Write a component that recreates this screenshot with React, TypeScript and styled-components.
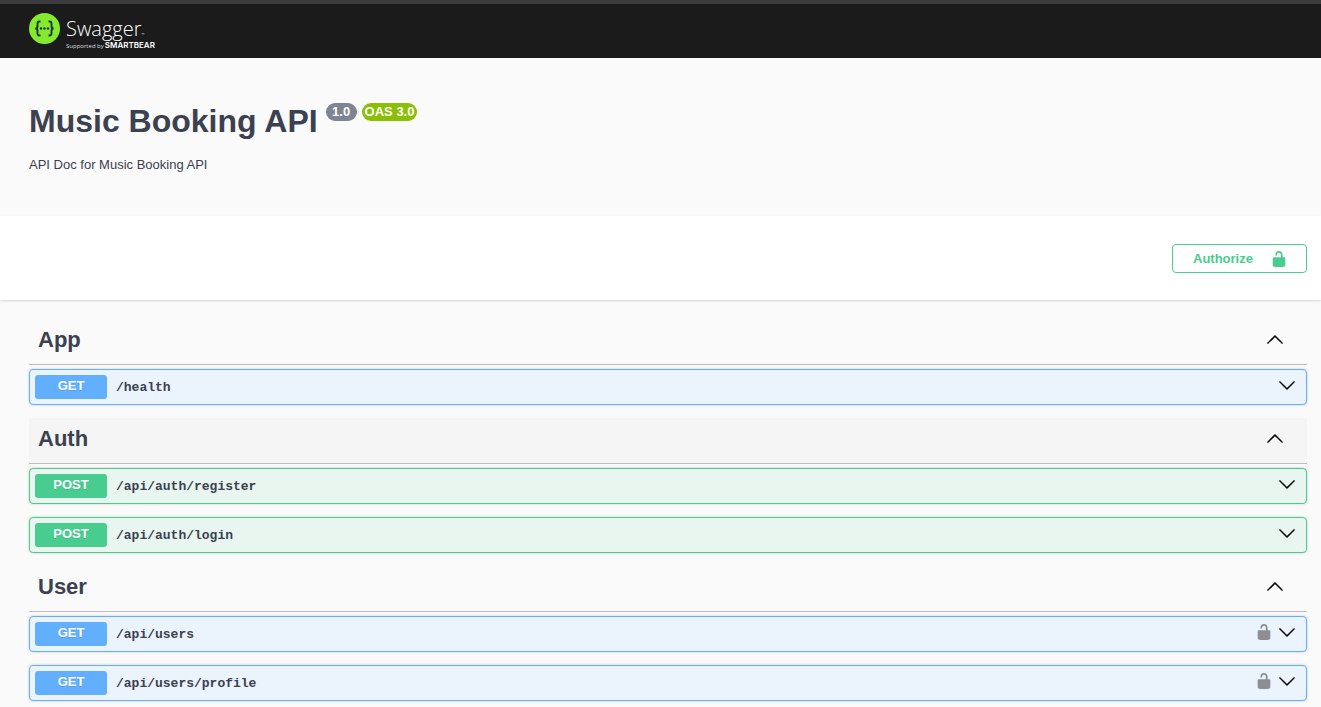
import React, { useState } from "react";
import styled, { createGlobalStyle } from "styled-components";

const GlobalStyle = createGlobalStyle`
  * { box-sizing: border-box; }
  body {
    margin: 0;
    background: #fafafa;
    color: #3b4151;
    font-family: "Liberation Sans", Arial, sans-serif;
  }
  button { font-family: inherit; color: inherit; cursor: pointer; }
`;

const colors = {
  get: { main: "#61affe", tint: "#ebf3fc" },
  post: { main: "#49cc90", tint: "#e8f6ef" },
};

type Method = keyof typeof colors;

const Topbar = styled.header`
  display: flex;
  align-items: flex-start;
  height: 58px;
  padding: 9px 14px 0 29px;
  background: #1b1b1b;
  border-top: 4px solid #3c3c3c;
`;

const LogoLink = styled.a`
  display: flex;
  gap: 6px;
  color: #fff;
  text-decoration: none;
`;

const LogoMark = styled.svg`
  width: 31px;
  height: 31px;
`;

const LogoText = styled.span`
  display: flex;
  flex-direction: column;
  padding-top: 4px;
`;

const LogoName = styled.span`
  font: 300 20px/23px "Open Sans", sans-serif;

  small {
    font-size: 4px;
    line-height: 4px;
  }
`;

const LogoTagline = styled.span`
  display: flex;
  align-items: baseline;
  gap: 1px;
  font: 400 6px/10px "Open Sans", sans-serif;
  color: #ddd;

  strong {
    font: 600 8px/10px Inter, sans-serif;
    color: #fff;
  }
`;

const Info = styled.section`
  padding: 44px 14px 41px 29px;
`;

const TitleRow = styled.div`
  display: flex;
  align-items: flex-start;
  gap: 5px;
  margin-bottom: 15px;
`;

const Title = styled.h1`
  margin: 0;
  padding-right: 3px;
  font-size: 32px;
  line-height: 38px;
`;

const Pill = styled.span<{ $color: string }>`
  margin-top: 1px;
  padding: 0 3px;
  min-width: 31px;
  border-radius: 9px;
  background: ${(p) => p.$color};
  color: #fff;
  font-size: 13px;
  font-weight: 700;
  line-height: 18px;
  text-align: center;
`;

const Description = styled.p`
  margin: 0;
  font-size: 13px;
  line-height: 20px;
`;

const SchemeBar = styled.section`
  display: flex;
  justify-content: flex-end;
  padding: 28px 14px 27px 29px;
  background: #fff;
  box-shadow: 0 1px 2px rgba(0, 0, 0, 0.15);
`;

const AuthorizeButton = styled.button`
  display: flex;
  align-items: center;
  justify-content: space-between;
  min-width: 135px;
  height: 29px;
  padding: 0 18px 0 20px;
  border: 1px solid #49cc90;
  border-radius: 4px;
  background: transparent;
  color: #49cc90;
  font-size: 13px;
  font-weight: 700;
`;

const Sections = styled.main`
  padding: 19px 14px 6px 29px;
`;

const TagHeading = styled.h2`
  margin: 0 0 4px;
`;

const TagButton = styled.button<{ $active?: boolean }>`
  display: flex;
  align-items: center;
  justify-content: space-between;
  width: 100%;
  height: 46px;
  padding: 0 23px 3px 9px;
  border: 0;
  border-bottom: 1px solid #bcbec2;
  background: ${(p) => (p.$active ? "#f5f5f5" : "transparent")};
  font-size: 22px;
  font-weight: 700;
  text-align: left;

  &:hover {
    background: #f5f5f5;
  }
`;

const Operation = styled.article<{ $method: Method }>`
  display: flex;
  align-items: center;
  height: 36px;
  margin-bottom: 13px;
  padding: 0 10px 0 5px;
  border: 1px solid ${(p) => colors[p.$method].main};
  border-radius: 4px;
  background: ${(p) => colors[p.$method].tint};
  box-shadow: 0 0 3px rgba(0, 0, 0, 0.19);
`;

const OperationSummary = styled.button`
  display: flex;
  flex: 1;
  align-items: center;
  gap: 9px;
  padding: 0;
  border: 0;
  background: none;
  text-align: left;
`;

const MethodBadge = styled.span<{ $method: Method }>`
  width: 72px;
  height: 24px;
  border-radius: 3px;
  background: ${(p) => colors[p.$method].main};
  color: #fff;
  font-size: 13px;
  font-weight: 700;
  line-height: 22px;
  text-align: center;
  text-shadow: 0 1px 0 rgba(0, 0, 0, 0.1);
`;

const Path = styled.span`
  padding-top: 2px;
  font: 700 13px/20px "Liberation Mono", monospace;
`;

const IconButton = styled.button`
  display: flex;
  padding: 0 0 4px;
  border: 0;
  background: none;
`;

const LockButton = styled(IconButton)`
  margin-right: 5px;
  color: #8b8f94;
`;

const Arrow = styled.svg<{ $up?: boolean }>`
  width: 18px;
  height: 18px;
  color: #000;
  transform: ${(p) => (p.$up ? "rotate(180deg)" : "none")};
`;

const Lock = styled.svg`
  width: 18px;
  height: 18px;
`;

const ArrowIcon = ({ up }: { up?: boolean }) => (
  <Arrow $up={up} viewBox="0 0 20 20" fill="currentColor" stroke="currentColor" strokeWidth="0.3" aria-hidden="true">
    <path d="M17.418 6.109c.272-.268.709-.268.979 0s.271.701 0 .969l-7.908 7.83c-.27.268-.707.268-.979 0l-7.908-7.83c-.27-.268-.27-.701 0-.969.271-.268.709-.268.979 0L10 13.25l7.418-7.141z" />
  </Arrow>
);

const UnlockIcon = () => (
  <Lock viewBox="0 0 20 20" fill="currentColor" aria-hidden="true">
    <path d="M15.8 8H14V5.6C14 2.703 12.665 1 10 1 7.334 1 6 2.703 6 5.6V6h2v-.801C8 3.754 8.797 3 10 3c1.203 0 2 .754 2 2.199V8H4c-.553 0-1 .646-1 1.199V17c0 .549.428 1.139.951 1.307l1.197.387C5.672 18.861 6.55 19 7.1 19h5.8c.549 0 1.428-.139 1.951-.307l1.196-.387c.524-.167.953-.757.953-1.306V9.199C17 8.646 16.352 8 15.8 8z" />
  </Lock>
);

interface Endpoint {
  method: Method;
  path: string;
  secured?: boolean;
}

const tags: { name: string; active?: boolean; endpoints: Endpoint[] }[] = [
  { name: "App", endpoints: [{ method: "get", path: "/health" }] },
  {
    name: "Auth",
    active: true,
    endpoints: [
      { method: "post", path: "/api/auth/register" },
      { method: "post", path: "/api/auth/login" },
    ],
  },
  {
    name: "User",
    endpoints: [
      { method: "get", path: "/api/users", secured: true },
      { method: "get", path: "/api/users/profile", secured: true },
    ],
  },
];

function TagSection({ name, active, endpoints }: (typeof tags)[number]) {
  const [open, setOpen] = useState(true);
  return (
    <section>
      <TagHeading>
        <TagButton $active={active} aria-expanded={open} onClick={() => setOpen(!open)}>
          {name}
          <ArrowIcon up={open} />
        </TagButton>
      </TagHeading>
      {open &&
        endpoints.map(({ method, path, secured }) => (
          <Operation key={path} $method={method}>
            <OperationSummary>
              <MethodBadge $method={method}>{method.toUpperCase()}</MethodBadge>
              <Path>{path}</Path>
            </OperationSummary>
            {secured && (
              <LockButton aria-label="Authorization required">
                <UnlockIcon />
              </LockButton>
            )}
            <IconButton aria-label={`Expand ${path}`}>
              <ArrowIcon />
            </IconButton>
          </Operation>
        ))}
    </section>
  );
}

export default function App() {
  return (
    <>
      <GlobalStyle />
      <Topbar>
        <LogoLink href="#">
          <LogoMark viewBox="0 0 31 31" aria-hidden="true">
            <circle cx="15.5" cy="15.5" r="15.5" fill="#85ea2d" />
            <g fill="none" stroke="#173647" strokeWidth="1.9">
              <path d="M11.5 8.5h-1c-1.5 0-2 .8-2 2.2v2.5c0 1.5-.7 2.3-2.2 2.3 1.5 0 2.2.8 2.2 2.3v2.5c0 1.4.5 2.2 2 2.2h1" />
              <path d="M19.5 8.5h1c1.5 0 2 .8 2 2.2v2.5c0 1.5.7 2.3 2.2 2.3-1.5 0-2.2.8-2.2 2.3v2.5c0 1.4-.5 2.2-2 2.2h-1" />
            </g>
            <g fill="#173647">
              <circle cx="12" cy="15.5" r="1.2" />
              <circle cx="15.5" cy="15.5" r="1.2" />
              <circle cx="19" cy="15.5" r="1.2" />
            </g>
          </LogoMark>
          <LogoText>
            <LogoName>
              Swagger<small>™</small>
            </LogoName>
            <LogoTagline>
              Supported by <strong>SMARTBEAR</strong>
            </LogoTagline>
          </LogoText>
        </LogoLink>
      </Topbar>
      <Info>
        <TitleRow>
          <Title>Music Booking API</Title>
          <Pill $color="#7d8492">1.0</Pill>
          <Pill $color="#89bf04">OAS 3.0</Pill>
        </TitleRow>
        <Description>API Doc for Music Booking API</Description>
      </Info>
      <SchemeBar>
        <AuthorizeButton>
          Authorize
          <UnlockIcon />
        </AuthorizeButton>
      </SchemeBar>
      <Sections>
        {tags.map((tag) => (
          <TagSection key={tag.name} {...tag} />
        ))}
      </Sections>
    </>
  );
}
